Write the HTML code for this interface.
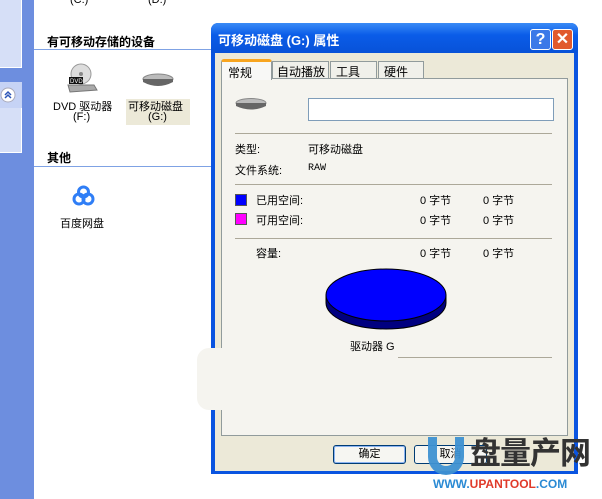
<!DOCTYPE html>
<html><head><meta charset="utf-8"><style>
*{margin:0;padding:0;box-sizing:border-box}
body{width:602px;height:499px;background:#fff;position:relative;overflow:hidden;font-family:"Liberation Sans","Noto Sans CJK SC","WenQuanYi Zen Hei",sans-serif;font-size:12px;color:#000}
.a{position:absolute;white-space:nowrap}
</style></head><body>
<div class="a" style="left:0;top:0;width:34px;height:499px;background:#6d8edf"></div>
<div class="a" style="left:0;top:0;width:22px;height:68px;background:#d6dff7;border-right:1px solid #fff;border-bottom:1px solid #fff"></div>
<div class="a" style="left:0;top:82px;width:22px;height:71px;background:#d6dff7;border-right:1px solid #fff;border-bottom:1px solid #fff"></div>
<div class="a" style="left:0;top:82px;width:22px;height:26px;background:#c6d3f5"></div>
<svg class="a" style="left:0;top:87px" width="18" height="18"><circle cx="8" cy="8" r="7" fill="#fff" stroke="#aab"/><path d="M5 8 L8 5 L11 8 M5 11 L8 8 L11 11" fill="none" stroke="#2c55b8" stroke-width="1.5"/></svg>
<div class="a" style="left:70px;top:-6px;font-size:11px">(C:)</div>
<div class="a" style="left:148px;top:-6px;font-size:11px">(D:)</div>
<div class="a" style="left:47px;top:33px;font-weight:bold;font-size:12px">有可移动存储的设备</div>
<div class="a" style="left:34px;top:49px;width:180px;height:1px;background:#7fa2e4"></div>
<svg class="a" style="left:64px;top:63px" width="36" height="32"><circle cx="17" cy="11" r="10" fill="#ddd" stroke="#999"/><circle cx="17" cy="11" r="2" fill="#888"/><rect x="5" y="14" width="14" height="7" fill="#111"/><text x="6" y="20" font-size="6" fill="#fff" font-family="Liberation Sans">DVD</text><path d="M4 22 L30 22 L33 27 L6 29 Z" fill="#aaa" stroke="#777"/></svg>
<div class="a" style="left:53px;top:98px;font-size:11px">DVD 驱动器</div>
<div class="a" style="left:73px;top:111px;font-size:11px">(F:)</div>
<svg class="a" style="left:140px;top:70px" width="36" height="18"><ellipse cx="18" cy="9" rx="15" ry="5" fill="#bbb" stroke="#888"/><path d="M3 9 L3 12 Q18 20 33 12 L33 9" fill="#666"/></svg>
<div class="a" style="left:126px;top:99px;width:64px;height:26px;background:#ece9d8"></div>
<div class="a" style="left:128px;top:98px;font-size:11px">可移动磁盘</div>
<div class="a" style="left:148px;top:111px;font-size:11px">(G:)</div>
<div class="a" style="left:47px;top:149px;font-weight:bold">其他</div>
<div class="a" style="left:34px;top:166px;width:180px;height:1px;background:#7fa2e4"></div>
<svg class="a" style="left:68px;top:182px" width="30" height="30"><rect width="30" height="30" rx="5" fill="#fff"/><circle cx="11" cy="17" r="5" fill="none" stroke="#2f7ef6" stroke-width="3"/><circle cx="20" cy="17" r="5" fill="none" stroke="#2f7ef6" stroke-width="3"/><circle cx="15.5" cy="10" r="5" fill="none" stroke="#2f7ef6" stroke-width="3"/></svg>
<div class="a" style="left:60px;top:215px;font-size:11px">百度网盘</div>

<div class="a" style="left:211px;top:23px;width:367px;height:451px;background:#0a54e0;border-radius:7px 7px 0 0"></div>
<div class="a" style="left:211px;top:23px;width:367px;height:30px;background:linear-gradient(#3a8bf6,#0a5ce8 40%,#0852d8);border-radius:7px 7px 0 0"></div>
<div class="a" style="left:218px;top:30px;color:#fff;font-weight:bold;font-size:13px">可移动磁盘 (G:) 属性</div>
<div class="a" style="left:530px;top:29px;width:21px;height:21px;background:#3b79e8;border:1px solid #fff;border-radius:3px;color:#fff;font-weight:bold;font-size:16px;line-height:19px;text-align:center">?</div>
<div class="a" style="left:552px;top:29px;width:21px;height:21px;background:#e1592d;border:1px solid #fff;border-radius:3px;color:#fff;font-weight:bold;font-size:16px;line-height:19px;text-align:center">✕</div>
<div class="a" style="left:215px;top:53px;width:359px;height:418px;background:#ece9d8"></div>
<div class="a" style="left:221px;top:78px;width:347px;height:358px;background:#f5f4ef;border:1px solid #919b9c"></div>
<div class="a" style="left:197px;top:348px;width:200px;height:62px;background:#f5f4ef;border-radius:12px"></div>
<div class="a" style="left:221px;top:59px;width:51px;height:21px;background:#f8f8f6;border:1px solid #919b9c;border-bottom:none;border-top:3px solid #f8a51f;border-radius:3px 3px 0 0;padding:2px 6px">常规</div>
<div class="a" style="left:272px;top:61px;width:57px;height:17px;background:#f0f0ea;border:1px solid #919b9c;border-bottom:none;padding:1px 4px">自动播放</div>
<div class="a" style="left:330px;top:61px;width:47px;height:17px;background:#f0f0ea;border:1px solid #919b9c;border-bottom:none;padding:1px 5px">工具</div>
<div class="a" style="left:378px;top:61px;width:46px;height:17px;background:#f0f0ea;border:1px solid #919b9c;border-bottom:none;padding:1px 5px">硬件</div>
<svg class="a" style="left:234px;top:96px" width="34" height="16"><ellipse cx="17" cy="7" rx="15" ry="4.5" fill="#bbb" stroke="#888"/><path d="M2 7 L2 10 Q17 17 32 10 L32 7" fill="#666"/></svg>
<div class="a" style="left:308px;top:98px;width:246px;height:23px;background:#fff;border:1px solid #7f9db9"></div>
<div class="a" style="left:235px;top:133px;width:317px;height:1px;background:#aca899"></div>
<div class="a" style="left:235px;top:141px;font-size:11px">类型:</div>
<div class="a" style="left:308px;top:141px;font-size:11px">可移动磁盘</div>
<div class="a" style="left:235px;top:162px;font-size:11px">文件系统:</div>
<div class="a" style="left:308px;top:163px;font-size:10px;font-family:'Liberation Mono',monospace">RAW</div>
<div class="a" style="left:235px;top:184px;width:317px;height:1px;background:#aca899"></div>
<div class="a" style="left:235px;top:194px;width:12px;height:12px;background:#0000ff;border:1px solid #555"></div>
<div class="a" style="left:256px;top:192px;font-size:11px">已用空间:</div>
<div class="a" style="left:235px;top:213px;width:12px;height:12px;background:#ff00ff;border:1px solid #555"></div>
<div class="a" style="left:256px;top:212px;font-size:11px">可用空间:</div>
<div class="a" style="left:420px;top:192px;font-size:11px">0 字节</div>
<div class="a" style="left:483px;top:192px;font-size:11px">0 字节</div>
<div class="a" style="left:420px;top:212px;font-size:11px">0 字节</div>
<div class="a" style="left:483px;top:212px;font-size:11px">0 字节</div>
<div class="a" style="left:235px;top:238px;width:317px;height:1px;background:#aca899"></div>
<div class="a" style="left:256px;top:245px;font-size:11px">容量:</div>
<div class="a" style="left:420px;top:245px;font-size:11px">0 字节</div>
<div class="a" style="left:483px;top:245px;font-size:11px">0 字节</div>
<svg class="a" style="left:324px;top:266px" width="124" height="66"><path d="M2 29 L2 37 A60 26 0 0 0 122 37 L122 29 Z" fill="#000080" stroke="#000" stroke-width="1"/><ellipse cx="62" cy="29" rx="60" ry="26" fill="#0000ff" stroke="#000"/></svg>
<div class="a" style="left:350px;top:338px;font-size:11px">驱动器 G</div>
<div class="a" style="left:398px;top:357px;width:154px;height:1px;background:#aca899"></div>
<div class="a" style="left:333px;top:445px;width:73px;height:19px;background:#f6f6f2;border:1px solid #003c74;border-radius:3px;box-shadow:inset 0 0 0 1px #8cb4f2;text-align:center;font-size:11px;line-height:17px">确定</div>
<div class="a" style="left:414px;top:445px;width:73px;height:19px;background:#f6f6f2;border:1px solid #003c74;border-radius:3px;text-align:center;font-size:11px;line-height:17px">取消</div>
<div class="a" style="left:428px;top:437px;width:36px;height:38px;border:9px solid #3f92d2;border-top:none;border-radius:0 0 18px 18px;opacity:.95"></div>
<div class="a" style="left:470px;top:436px;font-size:31px;font-weight:bold;color:#333;line-height:36px;letter-spacing:-1px">盘量产网</div>
<div class="a" style="left:433px;top:477px;font-size:12px;font-weight:bold;color:#2a8ad4">WWW.<span style="color:#e03a2a">UPANTOOL</span>.COM</div>
</body></html>
